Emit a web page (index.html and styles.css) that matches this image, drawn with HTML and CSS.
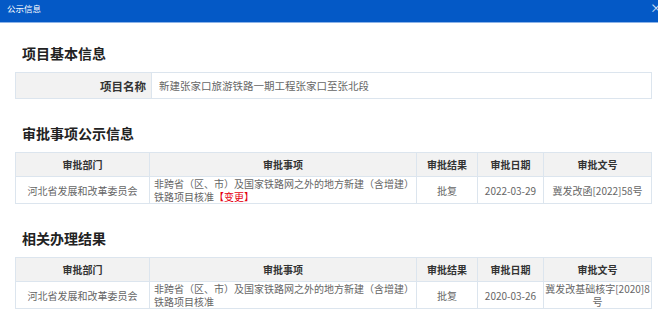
FILE: index.html
```html
<!DOCTYPE html>
<html lang="zh-CN">
<head>
    <meta charset="UTF-8">
    <meta name="viewport" content="width=device-width, initial-scale=1.0">
    <title>公示信息</title>
    <link rel="stylesheet" href="styles.css">
</head>
<body>
    <header class="dialog-header">
        <span class="dialog-title">公示信息</span>
        <span class="dialog-close">×</span>
    </header>

    <main class="content">
        <h2 class="section-title first">项目基本信息</h2>
        <table class="info-table">
            <tr>
                <th class="label">项目名称</th>
                <td class="value">新建张家口旅游铁路一期工程张家口至张北段</td>
            </tr>
        </table>

        <h2 class="section-title">审批事项公示信息</h2>
        <table class="grid-table">
            <colgroup>
                <col class="c-dept">
                <col class="c-item">
                <col class="c-result">
                <col class="c-date">
                <col class="c-doc">
            </colgroup>
            <tr>
                <th>审批部门</th>
                <th>审批事项</th>
                <th>审批结果</th>
                <th>审批日期</th>
                <th>审批文号</th>
            </tr>
            <tr>
                <td>河北省发展和改革委员会</td>
                <td class="left">非跨省（区、市）及国家铁路网之外的地方新建（含增建）铁路项目核准<span class="tag-red">【变更】</span></td>
                <td>批复</td>
                <td>2022-03-29</td>
                <td>冀发改函[2022]58号</td>
            </tr>
        </table>

        <h2 class="section-title">相关办理结果</h2>
        <table class="grid-table">
            <colgroup>
                <col class="c-dept">
                <col class="c-item">
                <col class="c-result">
                <col class="c-date">
                <col class="c-doc">
            </colgroup>
            <tr>
                <th>审批部门</th>
                <th>审批事项</th>
                <th>审批结果</th>
                <th>审批日期</th>
                <th>审批文号</th>
            </tr>
            <tr>
                <td>河北省发展和改革委员会</td>
                <td class="left">非跨省（区、市）及国家铁路网之外的地方新建（含增建）铁路项目核准</td>
                <td>批复</td>
                <td>2020-03-26</td>
                <td class="tight">冀发改基础核字[2020]8号</td>
            </tr>
        </table>
    </main>
</body>
</html>
```

FILE: styles.css
```css
body {
    margin: 0;
    overflow: hidden;
    font-family: "Noto Sans CJK SC", "Microsoft YaHei", sans-serif;
    background: #fff;
}

.dialog-header {
    display: flex;
    justify-content: space-between;
    height: 22px;
    line-height: 16px;
    padding-left: 7px;
    background-color: #0459c6;
    border-bottom: 1px solid #8cb3e8;
    color: #fff;
    font-size: 8.5px;
    overflow: hidden;
}

.dialog-close {
    font-size: 12px;
    color: #d6e4f7;
    margin-right: -4px;
}

.content {
    padding: 0 6px 0 15px;
}

.section-title {
    margin: 24px 0 9px 7px;
    font-size: 14px;
    line-height: 20px;
    font-weight: bold;
    color: #222;
}

.section-title.first {
    margin-top: 20px;
}

table {
    width: 100%;
    border-collapse: collapse;
    table-layout: fixed;
}

th, td {
    border: 1px solid #dce5ee;
    padding: 0;
}

.info-table th.label {
    width: 130px;
    height: 25px;
    padding-right: 5px;
    text-align: right;
    background-color: #f2f2f2;
    color: #333;
    font-size: 11.5px;
}

.info-table td.value {
    padding-left: 7px;
    font-size: 10.5px;
    color: #666;
}

.c-dept { width: 134px; }
.c-item { width: 267px; }
.c-result { width: 61px; }
.c-date { width: 66px; }

.grid-table th {
    height: 23px;
    background-color: #f2f2f2;
    color: #333;
    font-size: 10px;
    font-weight: bold;
}

.grid-table td {
    height: 24px;
    line-height: 13px;
    text-align: center;
    font-size: 10px;
    color: #666;
}

.grid-table td.left {
    text-align: left;
    padding-left: 4px;
}

.grid-table td.tight {
    word-break: break-all;
}

.tag-red {
    color: #e60012;
}
```
